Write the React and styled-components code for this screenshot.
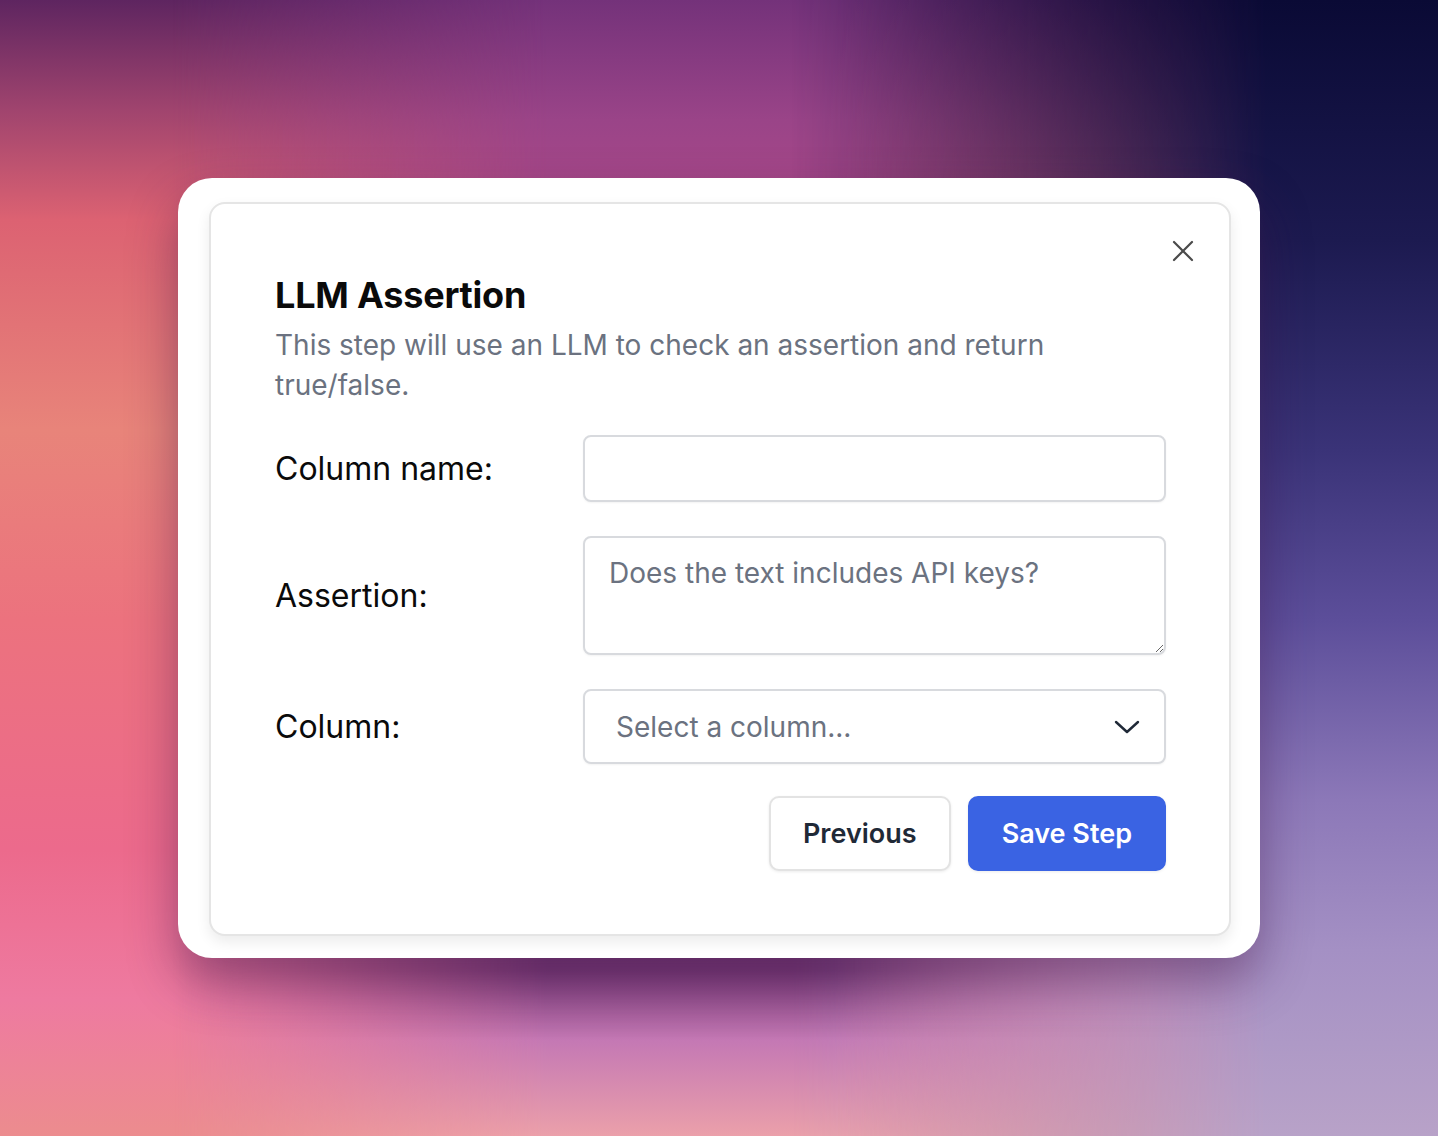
import React from "react";
import styled, { createGlobalStyle } from "styled-components";

const GlobalStyle = createGlobalStyle`
  html, body {
    margin: 0;
    padding: 0;
  }
  body {
    font-family: Inter, "Noto Sans", sans-serif;
    -webkit-font-smoothing: antialiased;
  }
  * {
    box-sizing: border-box;
  }
`;

export default function App() {
  return (
    <>
      <GlobalStyle />
      <Page>
        <Frame>
          <Card>
            <CloseButton aria-label="Close">
              <svg width="22" height="22" viewBox="0 0 22 22" fill="none">
                <path d="M2 2L20 20M20 2L2 20" stroke="#4b4b4b" strokeWidth="2.2" strokeLinecap="round" />
              </svg>
            </CloseButton>
            <Title>LLM Assertion</Title>
            <Description>
              This step will use an LLM to check an assertion and return true/false.
            </Description>
            <Form>
              <Label>Column name:</Label>
              <TextInput type="text" />
              <Label>Assertion:</Label>
              <TextArea placeholder="Does the text includes API keys?" />
              <Label>Column:</Label>
              <SelectBox>
                <span>Select a column...</span>
                <svg width="26" height="14" viewBox="0 0 26 14" fill="none">
                  <path d="M2 2L13 12L24 2" stroke="#1f2937" strokeWidth="2.4" strokeLinecap="round" strokeLinejoin="round" />
                </svg>
              </SelectBox>
            </Form>
            <Actions>
              <Button>Previous</Button>
              <Button primary>Save Step</Button>
            </Actions>
          </Card>
        </Frame>
      </Page>
    </>
  );
}

// the backdrop is three vertical colour columns (left, middle, right) blended across
const Page = styled.div`
  position: relative;
  width: 100%;
  min-height: 100vh;
  display: flex;
  justify-content: center;
  padding-top: 178px;
  background: linear-gradient(
    to bottom,
    #5e2560 0px,
    #a0446e 110px,
    #dc6272 220px,
    #e8847a 430px,
    #ec727e 620px,
    #ec6a8c 850px,
    #ee7aa0 1000px,
    #ec8c8e 1136px
  );

  &::before {
    content: "";
    position: absolute;
    inset: 0;
    background: linear-gradient(
      to bottom,
      #74327a 0px,
      #9a4488 120px,
      #a84888 200px,
      #8a3c80 600px,
      #7a3a78 970px,
      #c478b4 1040px,
      #eba0aa 1136px
    );
    -webkit-mask-image: linear-gradient(to right, transparent 12%, black 38%, black 58%, transparent 80%);
    mask-image: linear-gradient(to right, transparent 12%, black 38%, black 58%, transparent 80%);
  }

  &::after {
    content: "";
    position: absolute;
    inset: 0;
    background: linear-gradient(
      to bottom,
      #0a0a35 0px,
      #1c1a50 240px,
      #3a3378 450px,
      #5c4e9a 620px,
      #8c78b8 800px,
      #a490c4 950px,
      #b8a2c8 1136px
    );
    -webkit-mask-image: linear-gradient(to right, transparent 55%, black 88%);
    mask-image: linear-gradient(to right, transparent 55%, black 88%);
  }
`;

const Frame = styled.div`
  position: relative;
  z-index: 1;
  width: 1082px;
  height: 780px;
  padding: 24px 29px 22px 31px;
  background: #ffffff;
  border-radius: 34px;
  box-shadow: 0 24px 50px rgba(60, 20, 70, 0.45);
`;

const Card = styled.div`
  position: relative;
  height: 100%;
  border: 2px solid #e5e5e5;
  border-radius: 16px;
  background: #ffffff;
  box-shadow: 0 6px 14px rgba(0, 0, 0, 0.08);
  padding: 69px 63px 0 64px;
`;

const CloseButton = styled.button`
  position: absolute;
  top: 32px;
  right: 31px;
  width: 30px;
  height: 30px;
  display: flex;
  align-items: center;
  justify-content: center;
  border: none;
  background: none;
  padding: 0;
  cursor: pointer;
`;

const Title = styled.h2`
  margin: 0;
  font-size: 36px;
  line-height: 44px;
  font-weight: 700;
  color: #0a0a0a;
  letter-spacing: -0.2px;
`;

const Description = styled.p`
  margin: 8px 0 0;
  width: 820px;
  font-size: 28px;
  line-height: 40px;
  color: #6b7280;
`;

const Form = styled.div`
  margin-top: 30px;
  display: grid;
  grid-template-columns: 308px 1fr;
  row-gap: 34px;
  align-items: center;
`;

const Label = styled.label`
  font-size: 32px;
  color: #0a0a0a;
`;

const fieldBase = `
  width: 100%;
  border: 2px solid #d8dade;
  border-radius: 8px;
  background: #ffffff;
  font-family: Inter, "Noto Sans", sans-serif;
  font-size: 28px;
  color: #111827;
  box-shadow: 0 1px 2px rgba(0, 0, 0, 0.05);
  outline: none;
`;

const TextInput = styled.input`
  ${fieldBase}
  height: 67px;
  padding: 0 24px;
`;

const TextArea = styled.textarea`
  ${fieldBase}
  display: block;
  height: 119px;
  padding: 18px 24px;
  resize: vertical;

  &::placeholder {
    color: #6b7280;
  }
`;

const SelectBox = styled.div`
  ${fieldBase}
  height: 75px;
  display: flex;
  align-items: center;
  justify-content: space-between;
  padding: 0 24px 0 31px;
  color: #6b7280;
`;

const Actions = styled.div`
  margin-top: 32px;
  display: flex;
  justify-content: flex-end;
  gap: 17px;
`;

const Button = styled.button`
  height: 75px;
  padding: 0 32px;
  border-radius: 10px;
  font-family: Inter, "Noto Sans", sans-serif;
  font-size: 27px;
  font-weight: 600;
  cursor: pointer;
  border: 2px solid ${(p) => (p.primary ? "#3a63e3" : "#e3e3e3")};
  background: ${(p) => (p.primary ? "#3a63e3" : "#ffffff")};
  color: ${(p) => (p.primary ? "#ffffff" : "#1f2937")};
  box-shadow: 0 1px 3px rgba(0, 0, 0, 0.08);
`;
